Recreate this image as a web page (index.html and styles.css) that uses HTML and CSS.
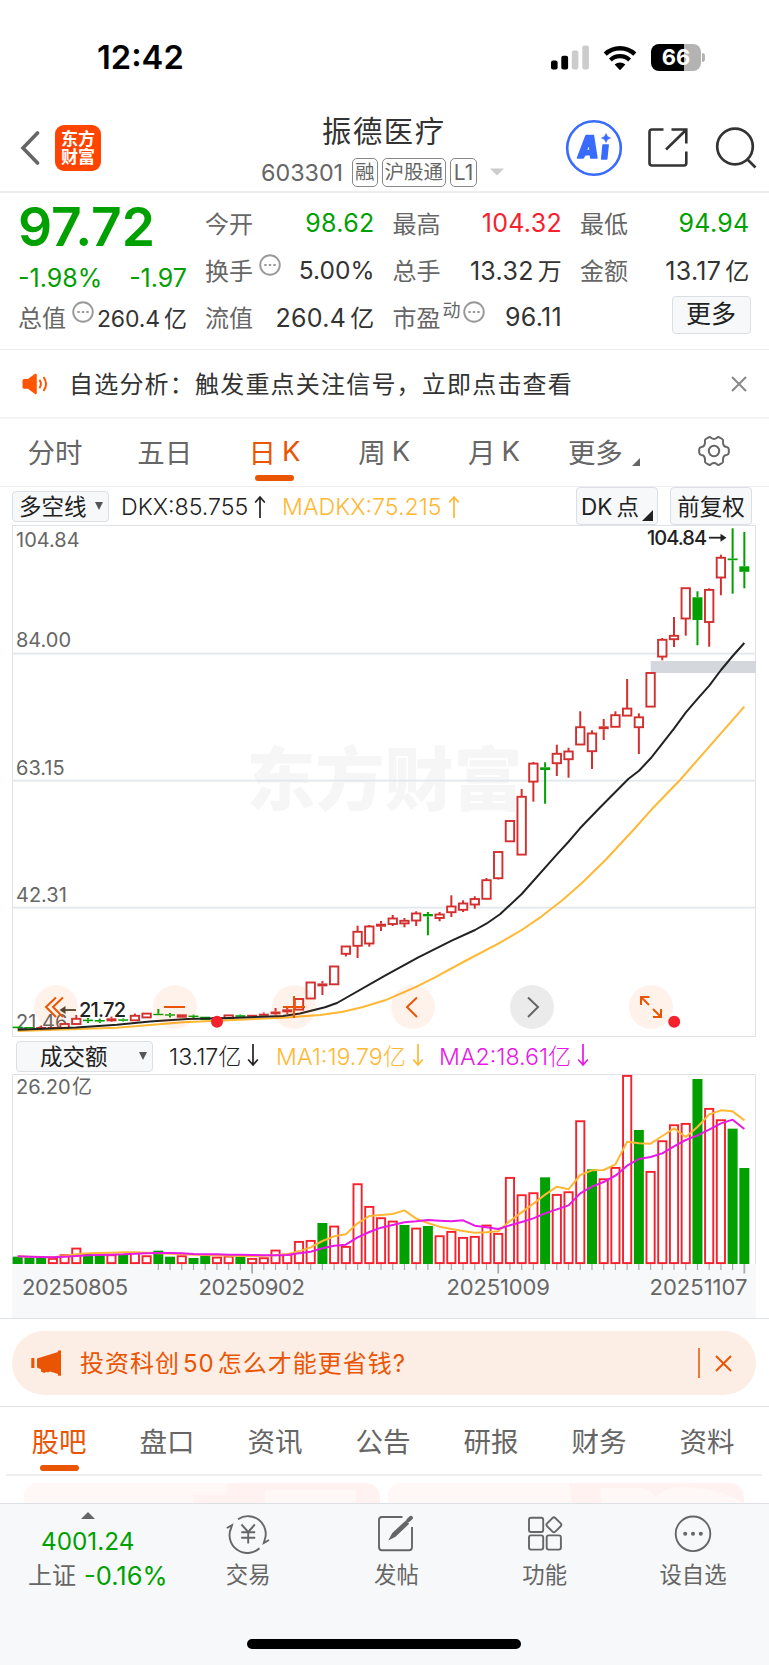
FILE: index.html
```html
<!DOCTYPE html>
<html lang="zh-CN">
<head>
    <meta charset="UTF-8">
    <meta name="viewport" content="width=device-width, initial-scale=1.0">
    <title>振德医疗 603301</title>
    <link rel="stylesheet" href="styles.css">
</head>
<body>

<div class="status-bar">
    <div class="clock">12:42</div>
    <div class="status-icons">
        <svg class="signal" width="38" height="25" viewBox="0 0 38 25">
            <rect x="0" y="15.5" width="6.6" height="9" rx="2"/>
            <rect x="10.3" y="10.8" width="6.8" height="13.7" rx="2"/>
            <rect x="20.8" y="5.6" width="6.6" height="18.9" rx="2" fill="#ccc"/>
            <rect x="31.3" y="0.5" width="6.6" height="24" rx="2" fill="#ccc"/>
        </svg>
        <svg class="wifi" width="34" height="26" viewBox="0 0 34 26">
            <path d="M2.2 9.2 A21.5 21.5 0 0 1 31.8 9.2" fill="none" stroke="#000" stroke-width="4.4"/>
            <path d="M7.4 15 A14 14 0 0 1 26.6 15" fill="none" stroke="#000" stroke-width="4.2"/>
            <path d="M17 25.2 L11.6 19.6 A8 8 0 0 1 22.4 19.6 Z"/>
        </svg>
        <div class="battery"><span>66</span></div>
        <div class="battery-tip"></div>
    </div>
</div>

<div class="nav-bar">
    <div class="nav-left">
        <svg width="20" height="36" viewBox="0 0 20 36"><path d="M17.5 3 L3 18 L17.5 33" fill="none" stroke="#666" stroke-width="3.6" stroke-linecap="round"/></svg>
        <div class="logo">东方<br>财富</div>
    </div>
    <div class="nav-title">
        <div class="stock-name">振德医疗</div>
        <div class="stock-code">
            <span class="code">603301</span>
            <span class="tag">融</span>
            <span class="tag">沪股通</span>
            <span class="tag level">L1</span>
            <svg width="14" height="8" viewBox="0 0 14 8"><path d="M0 0.5 H14 L7 7.5 Z" fill="#ccc"/></svg>
        </div>
    </div>
    <div class="nav-right">
        <svg width="58" height="58" viewBox="0 0 58 58">
            <circle cx="29" cy="29" r="26.8" fill="none" stroke="#3a6bff" stroke-width="2.6"/>
            <g fill="#3a6bff" stroke="#3a6bff" stroke-width="1.4" stroke-linejoin="round">
                <path fill-rule="evenodd" d="M21 16.5 H28.5 L32 39 H25.8 L25.2 35.8 H20.2 L18.2 39 H12.4 Z M24.2 25 L21.2 31.4 H25 Z"/>
                <path d="M38 26 H43.2 L41.8 40 H36.6 Z"/>
                <path stroke-width="0.5" d="M41 14.5 L42.6 17.6 L45.6 19 L42.6 20.5 L41 23.5 L39.4 20.5 L36.4 19 L39.4 17.6 Z"/>
            </g>
        </svg>
        <svg class="share" width="42" height="42" viewBox="0 0 42 42" fill="none" stroke="#333" stroke-width="2.6">
            <path d="M16.5 2.5 H5 Q2.5 2.5 2.5 5 V36 Q2.5 38.5 5 38.5 H37 Q39.3 38.5 39.3 36 V24.5"/>
            <path d="M24.5 2.5 H39.3 V16.5 M39 3 L19 22.5"/>
        </svg>
        <svg width="42" height="42" viewBox="0 0 42 42" fill="none" stroke="#333" stroke-width="2.7">
            <circle cx="20" cy="19.5" r="17.8"/>
            <path d="M32 32 L40.5 40.5"/>
        </svg>
    </div>
</div>

<div class="quote">
    <div class="quote-main">
        <div class="price down">97.72</div>
        <div class="change down"><span>-1.98%</span><span>-1.97</span></div>
        <div class="cell"><span class="label">总值</span><svg class="more-dot" viewBox="0 0 22 22"><circle cx="11" cy="11" r="9.8"/><path d="M5.3 11h2.4M9.8 11h2.4M14.3 11h2.4"/></svg><span class="value small">260.4<i>亿</i></span></div>
    </div>
    <div class="quote-grid">
        <div class="cell"><span class="label">今开</span><span class="value down">98.62</span></div>
        <div class="cell"><span class="label">最高</span><span class="value up">104.32</span></div>
        <div class="cell"><span class="label">最低</span><span class="value down">94.94</span></div>
        <div class="cell"><span class="label">换手</span><svg class="more-dot" viewBox="0 0 22 22"><circle cx="11" cy="11" r="9.8"/><path d="M5.3 11h2.4M9.8 11h2.4M14.3 11h2.4"/></svg><span class="value percent">5.00%</span></div>
        <div class="cell"><span class="label">总手</span><span class="value">13.32<i>万</i></span></div>
        <div class="cell"><span class="label">金额</span><span class="value">13.17<i>亿</i></span></div>
        <div class="cell"><span class="label">流值</span><span class="value">260.4<i>亿</i></span></div>
        <div class="cell"><span class="label">市盈</span><span class="sup">动</span><svg class="more-dot tight" viewBox="0 0 22 22"><circle cx="11" cy="11" r="9.8"/><path d="M5.3 11h2.4M9.8 11h2.4M14.3 11h2.4"/></svg><span class="value">96.11</span></div>
        <div class="cell"><button class="more-button">更多</button></div>
    </div>
</div>

<div class="notice">
    <svg class="speaker" width="26" height="22" viewBox="0 0 26 22">
        <path d="M0.5 7.5 Q0.5 6 2 6 H6 L13 0.8 Q14.6 0.2 14.8 2 V20 Q14.6 21.8 13 21 L6 15.8 H2 Q0.5 15.8 0.5 14 Z" fill="#ff5500"/>
        <path d="M17.5 6.8 Q20.3 11 17.5 15.2 M21.5 4 Q26.6 11 21.5 18" fill="none" stroke="#ff5500" stroke-width="2"/>
    </svg>
    <span class="notice-text">自选分析：触发重点关注信号，立即点击查看</span>
    <svg width="16" height="16" viewBox="0 0 16 16"><path d="M1 1 L15 15 M15 1 L1 15" stroke="#888" stroke-width="2"/></svg>
</div>

<div class="period-tabs">
    <div class="tab">分时</div>
    <div class="tab">五日</div>
    <div class="tab active">日<i>K</i></div>
    <div class="tab">周<i>K</i></div>
    <div class="tab">月<i>K</i></div>
    <div class="tab more">更多<svg width="8" height="8" viewBox="0 0 8 8"><path d="M8 0 V8 H0 Z" fill="#666"/></svg></div>
    <div class="tab">
        <svg width="32" height="32" viewBox="0 0 32 32" fill="none" stroke="#666" stroke-width="2" stroke-linejoin="round">
            <path d="M10.2 2.6 Q12 1.4 13 2.8 Q16 5 19 2.8 Q20 1.4 21.8 2.6 L24.2 4 Q25.6 4.8 25 6.8 Q24.8 11.6 28.6 12 Q30.8 12.6 30.8 14.2 V17.8 Q30.8 19.4 28.6 20 Q24.8 20.4 25 25.2 Q25.6 27.2 24.2 28 L21.8 29.4 Q20 30.6 19 29.2 Q16 27 13 29.2 Q12 30.6 10.2 29.4 L7.8 28 Q6.4 27.2 7 25.2 Q7.2 20.4 3.4 20 Q1.2 19.4 1.2 17.8 V14.2 Q1.2 12.6 3.4 12 Q7.2 11.6 7 6.8 Q6.4 4.8 7.8 4 Z"/>
            <circle cx="16" cy="16" r="5.2"/>
        </svg>
    </div>
</div>

<div class="indicator-bar">
    <div class="select">多空线<span class="caret"></span></div>
    <span class="ind dkx">DKX:85.755<svg class="arr" viewBox="0 0 12 24"><path d="M6 23V2M1.2 7.5L6 2l4.8 5.5"/></svg></span>
    <span class="ind madkx">MADKX:75.215<svg class="arr" viewBox="0 0 12 24"><path d="M6 23V2M1.2 7.5L6 2l4.8 5.5"/></svg></span>
    <div class="chip dk">DK<i>点</i><span class="corner"></span></div>
    <div class="chip">前复权</div>
</div>

<div class="chart-wrap">
    <div class="watermark">东方财富</div>
    <svg id="kline" class="kline" width="745" height="513" viewBox="12 525 745 513"></svg>
    <div class="chart-tools">
        <button class="tool"><svg viewBox="0 0 44 44"><path d="M22 12.5 L12 22 L22 32 M29 12.5 L19 22 L29 32"/></svg></button>
        <button class="tool"><svg viewBox="0 0 44 44"><path d="M11 22 H32"/></svg></button>
        <button class="tool"><svg viewBox="0 0 44 44"><path d="M11 22 H33 M22 11 V33"/></svg></button>
        <button class="tool"><svg viewBox="0 0 44 44"><path d="M26 12.5 L16 22 L26 32"/></svg></button>
        <button class="tool gray"><svg viewBox="0 0 44 44"><path d="M18 12.5 L28 22 L18 32"/></svg></button>
        <button class="tool"><svg viewBox="0 0 44 44"><path d="M20.5 12 H12 V20 M12 12 L20 20 M24 32 H32 V24 M32 32 L24 24"/></svg></button>
    </div>
</div>

<div class="volume-bar">
    <div class="select wide">成交额<span class="caret"></span></div>
    <span class="ind vol">13.17亿<svg class="arr" viewBox="0 0 12 24"><path d="M6 1V22M1.2 16.5L6 22l4.8-5.5"/></svg></span>
    <span class="ind ma1">MA1:19.79亿<svg class="arr" viewBox="0 0 12 24"><path d="M6 1V22M1.2 16.5L6 22l4.8-5.5"/></svg></span>
    <span class="ind ma2">MA2:18.61亿<svg class="arr" viewBox="0 0 12 24"><path d="M6 1V22M1.2 16.5L6 22l4.8-5.5"/></svg></span>
</div>

<svg id="volume" class="volume" width="745" height="244" viewBox="12 1074 745 244"></svg>

<div class="banner-row">
    <div class="banner">
        <svg width="31" height="26" viewBox="0 0 31 26" fill="#ea5504">
            <path d="M0.3 8 H3.4 V18 H0.3 Z M6 8.5 L27 2 V0.4 H30 V25.8 H27 V24 L19 21.6 L17 22.6 L15.4 21.8 L13.5 23 L10 21.5 V19.3 L6 17.6 Z"/>
        </svg>
        <span class="banner-text">投资科创<b>50</b>怎么才能更省钱?</span>
        <span class="banner-line"></span>
        <svg width="17" height="17" viewBox="0 0 17 17"><path d="M1 1 L16 16 M16 1 L1 16" stroke="#ea5504" stroke-width="2"/></svg>
    </div>
</div>

<div class="info-tabs">
    <div class="tab active">股吧</div>
    <div class="tab">盘口</div>
    <div class="tab">资讯</div>
    <div class="tab">公告</div>
    <div class="tab">研报</div>
    <div class="tab">财务</div>
    <div class="tab">资料</div>
</div>

<div class="cards">
    <svg class="card" viewBox="0 0 356 20">
        <rect width="356" height="20" fill="#fff2f0"/>
        <path d="M0 0H203V12H170V20H0Z" fill="#fff8f6"/>
        <rect x="241" y="7" width="91" height="13" fill="#fff8f6"/>
    </svg>
    <svg class="card" viewBox="0 0 356 20">
        <rect width="356" height="20" fill="#fff2f0"/>
        <path d="M0 0H181L184 20H0Z" fill="#fff8f6"/>
        <path d="M212 5H256Q264 8 268 14Q276 5 290 4Q330 4 356 20H214Z" fill="#fff8f6"/>
    </svg>
</div>

<div class="bottom-bar">
    <div class="index">
        <svg width="14" height="7" viewBox="0 0 14 7"><path d="M7 0 L14 7 H0 Z" fill="#666"/></svg>
        <div class="index-value down">4001.24</div>
        <div class="index-name">上证<span class="down">-0.16%</span></div>
    </div>
    <div class="action">
        <svg width="44" height="40" viewBox="0 0 44 40" fill="none" stroke="#666" stroke-width="1.9">
            <path d="M12 5.2 A17.8 17.8 0 0 1 38.5 26.5 L37.8 29 L43 26"/>
            <path d="M33.5 34.2 A17.8 17.8 0 0 1 5.3 13.5 L6 11.2 L0.8 14"/>
            <path d="M15.5 10.5 L22.2 18 L28.8 10.5 M15.2 18.3 H29.2 M15.2 23.8 H29.2 M22.2 18 V29.5"/>
        </svg>
        <span>交易</span>
    </div>
    <div class="action">
        <svg width="44" height="40" viewBox="0 0 44 40" fill="none" stroke="#666" stroke-width="1.9">
            <path d="M28.5 3 H8 Q5 3 5 6 V33 Q5 36.3 8 36.3 H35 Q38 36.3 38 33 V13"/>
            <path d="M16.5 24.3 L19 19.5 L31.8 7.8 L33.8 9.8 L21 22 Z" fill="#666"/>
            <path d="M34.2 6.4 L37 3.8" stroke-width="4" stroke-linecap="round"/>
        </svg>
        <span>发帖</span>
    </div>
    <div class="action">
        <svg width="44" height="40" viewBox="0 0 44 40" fill="none" stroke="#666" stroke-width="1.9">
            <rect x="6" y="3.8" width="14.2" height="14.2" rx="2"/>
            <rect x="6" y="21.4" width="14.2" height="14.2" rx="2"/>
            <rect x="23.7" y="21.4" width="14.2" height="14.2" rx="2"/>
            <rect x="25.1" y="5" width="11.6" height="11.6" rx="2" transform="rotate(45 30.9 10.8)"/>
        </svg>
        <span>功能</span>
    </div>
    <div class="action">
        <svg width="44" height="40" viewBox="0 0 44 40">
            <circle cx="22" cy="19.8" r="17.3" fill="none" stroke="#666" stroke-width="1.9"/>
            <g fill="#666"><circle cx="14.2" cy="19.8" r="2"/><circle cx="22" cy="19.8" r="2"/><circle cx="29.8" cy="19.8" r="2"/></g>
        </svg>
        <span>设自选</span>
    </div>
    <div class="home-indicator"></div>
</div>

<script src="chart.js"></script>
</body>
</html>
```
FILE: styles.css
```css
* {
    box-sizing: border-box;
}
body {
    margin: 0;
    width: 769px;
    height: 1665px;
    overflow: hidden;
    display: flex;
    flex-direction: column;
    background: #fff;
    color: #333;
    font-family: Inter, "Noto Sans CJK SC", sans-serif;
}
body > * {
    flex-shrink: 0;
}
i {
    font-style: normal;
}
svg {
    display: block;
    flex-shrink: 0;
}
button {
    font-family: inherit;
    padding: 0;
    border: none;
}
.down {
    color: #00a000;
}
.up {
    color: #f5222d;
}

/* status bar */
.status-bar {
    height: 96px;
    padding: 36px 64px 0 97px;
    display: flex;
    justify-content: space-between;
}
.clock {
    font-size: 32.7px;
    line-height: 42px;
    font-weight: 600;
    color: #000;
}
.status-icons {
    height: 43px;
    display: flex;
    align-items: center;
}
.wifi {
    margin: 0 14px 0 14px;
}
.battery {
    width: 50px;
    height: 27px;
    border-radius: 8px;
    background: linear-gradient(90deg, #000 33px, #b3b3b3 33px);
    color: #fff;
    font-size: 22px;
    line-height: 27px;
    font-weight: 700;
    text-align: center;
}
.battery-tip {
    width: 3px;
    height: 9px;
    margin-left: 1px;
    border-radius: 0 3px 3px 0;
    background: #b3b3b3;
}

/* title bar */
.nav-bar {
    height: 97px;
    padding: 0 12px 0 20px;
    border-bottom: 2px solid #eee;
    display: flex;
    justify-content: space-between;
}
.nav-left {
    width: 200px;
    height: 103px;
    display: flex;
    align-items: center;
}
.logo {
    width: 46px;
    height: 46px;
    margin-left: 15px;
    padding-top: 5px;
    border-radius: 9px;
    background: #ff4400;
    color: #fff;
    font-size: 17px;
    line-height: 18.5px;
    font-weight: 700;
    text-align: center;
}
.nav-title {
    flex: 1;
    padding-left: 41px;
}
.stock-name {
    padding: 15px 0 0 61px;
    font-size: 29.3px;
    line-height: 42px;
    letter-spacing: 1.6px;
}
.stock-code {
    height: 30px;
    margin-top: 4px;
    display: flex;
    align-items: center;
    color: #666;
}
.code {
    width: 91px;
    font-size: 23.3px;
}
.tag {
    height: 29px;
    margin-right: 4px;
    padding: 0 2px;
    border: 1px solid #888;
    border-radius: 5px;
    font-size: 19.5px;
    line-height: 27px;
    text-align: center;
}
.tag.level {
    width: 27px;
    padding: 0;
    font-size: 21px;
}
.stock-code svg {
    margin-left: 9px;
}
.nav-right {
    height: 103px;
    display: flex;
    align-items: center;
}
.share {
    margin: 0 26px 0 24px;
}

/* quote */
.quote {
    height: 157px;
    padding: 0 19px 0 18px;
    border-bottom: 1px solid #eee;
    display: flex;
}
.quote-main {
    width: 169px;
    margin-right: 18px;
}
.price {
    height: 62px;
    font-size: 53.4px;
    line-height: 67px;
    font-weight: 600;
}
.change {
    height: 38px;
    display: flex;
    justify-content: space-between;
    font-size: 25px;
    line-height: 46px;
}
.quote-grid {
    flex: 1;
    padding-top: 6px;
    display: grid;
    grid-template-columns: 169.5px 169.5px 169.5px;
    grid-template-rows: 47px 47px 47px;
    column-gap: 18px;
}
.cell {
    height: 47px;
    display: flex;
    align-items: center;
}
.label {
    margin-top: -1px;
    font-size: 24px;
    color: #666;
}
.value {
    margin-left: auto;
    font-size: 25px;
    letter-spacing: 0.3px;
    white-space: nowrap;
}
.value.percent {
    font-size: 24.5px;
    letter-spacing: 0;
}
.value.small {
    font-size: 23px;
    letter-spacing: -0.1px;
}
.value i {
    margin-left: 4px;
    font-size: 24px;
}
.value.small i {
    font-size: 23px;
}
.more-dot {
    width: 22px;
    height: 22px;
    margin: -10px 0 0 6px;
    fill: none;
    stroke: #999;
    stroke-width: 1.9;
}
.more-dot.tight {
    margin-left: 2px;
}
.sup {
    margin: -16px 0 0 2px;
    font-size: 18px;
    color: #666;
}
.more-button {
    width: 79px;
    height: 38px;
    margin: -4px -1px 0 auto;
    flex-shrink: 0;
    border: 1px solid #dcdee5;
    border-radius: 4px;
    background: #f7f8fa;
    color: #222;
    font-size: 25px;
    line-height: 35px;
}

/* notice */
.notice {
    height: 69px;
    padding: 0 22px;
    border-bottom: 2px solid #f4f4f4;
    display: flex;
    align-items: center;
}
.notice-text {
    flex: 1;
    margin: -2px 0 0 21px;
    font-size: 24px;
    letter-spacing: 1.2px;
}

/* tabs */
.period-tabs {
    height: 68px;
    border-bottom: 1px solid #eee;
    display: flex;
}
.tab {
    position: relative;
    width: 108px;
    height: 66px;
    padding-bottom: 2px;
    display: flex;
    align-items: center;
    justify-content: center;
    font-size: 27.5px;
    color: #666;
}
.period-tabs .tab {
    width: 109.8px;
}
.tab i {
    margin-left: 6px;
}
.tab.more svg {
    margin: 22px 0 0 9px;
}
.tab.active {
    color: #ea5504;
}
.tab.active::after {
    content: "";
    position: absolute;
    left: 50%;
    bottom: 4px;
    width: 39px;
    height: 6px;
    margin-left: -19px;
    border-radius: 3px;
    background: #ea5504;
}

/* indicator rows */
.indicator-bar {
    height: 38px;
    padding: 0 17px 0 12px;
    display: flex;
    align-items: center;
}
.select {
    width: 97px;
    height: 31px;
    padding: 0 5px 0 6px;
    border: 1px solid #dcdfe4;
    border-radius: 4px;
    background: #f7f8fa;
    display: flex;
    align-items: center;
    justify-content: space-between;
    font-size: 22.5px;
    line-height: 29px;
    color: #222;
}
.caret {
    border: 4.5px solid transparent;
    border-top: 8px solid #555;
    border-bottom: none;
}
.select.wide {
    width: 137px;
    padding-left: 23px;
}
.ind {
    display: flex;
    align-items: center;
    font-size: 23.2px;
    font-weight: 300;
    color: #222;
    white-space: nowrap;
}
.dkx {
    width: 148px;
    margin: 1px 0 0 12px;
}
.madkx {
    margin: 1px 0 0 13px;
    color: #ffb833;
}
.ma1 {
    width: 149px;
    margin-left: 13px;
    color: #ffb833;
}
.ma2 {
    margin-left: 14px;
    color: #e619e6;
}
.vol {
    width: 94px;
    margin-left: 16px;
}
.volume-bar .ind {
    margin-top: -2px;
}
.arr {
    width: 12px;
    height: 24px;
    margin-left: 6px;
    fill: none;
    stroke: currentColor;
    stroke-width: 1.7;
}
.chip {
    position: relative;
    width: 82px;
    height: 38px;
    border: 1px solid #dcdee5;
    border-radius: 4px;
    background: #f7f8fa;
    font-size: 22.5px;
    line-height: 37px;
    text-align: center;
    color: #222;
    white-space: nowrap;
}
.chip.dk {
    margin: 0 12px 0 auto;
    padding-right: 14px;
}
.chip.dk i {
    margin-left: 4px;
}
.corner {
    position: absolute;
    right: 4px;
    bottom: 3px;
    border-left: 11px solid transparent;
    border-bottom: 11px solid #222;
}

/* charts */
.chart-wrap {
    position: relative;
    height: 513px;
    padding-left: 12px;
}
.watermark {
    position: absolute;
    left: 0;
    top: 205px;
    width: 769px;
    text-align: center;
    font-size: 69px;
    line-height: 100px;
    font-weight: 900;
    color: #f6f6f6;
}
.kline {
    position: relative;
}
.kline text, .volume text {
    fill: #666;
    font-size: 20px;
}
.kline .mark {
    fill: #222;
    font-weight: 500;
}
.volume .date {
    font-size: 22px;
}
.chart-tools {
    position: absolute;
    left: 34px;
    top: 460px;
    display: flex;
    gap: 75px;
}
.tool {
    width: 44px;
    height: 44px;
    border-radius: 50%;
    background: rgba(255, 85, 0, 0.08);
}
.tool svg {
    fill: none;
    stroke: #ea5504;
    stroke-width: 2;
}
.tool.gray {
    background: rgba(0, 0, 0, 0.08);
}
.tool.gray svg {
    stroke: #666;
}
.volume-bar {
    height: 36px;
    padding-left: 16px;
    display: flex;
    align-items: center;
}
.volume {
    margin-left: 12px;
}

/* banner */
.banner-row {
    height: 89px;
    padding: 12px 13px 0 12px;
    border-top: 1px solid #dfe1e5;
    border-bottom: 1px solid #dfe1e5;
}
.banner {
    height: 64px;
    padding: 0 24px 0 19px;
    border-radius: 32px;
    background: #fdeee5;
    display: flex;
    align-items: center;
    color: #ea5504;
}
.banner-text {
    flex: 1;
    margin: -3px 0 0 18px;
    font-size: 24px;
    letter-spacing: 1px;
}
.banner-text b {
    margin: 0 3px;
    font-weight: 400;
}
.banner-line {
    width: 2px;
    height: 30px;
    margin-right: 15px;
    background: #ea7a3c;
}

/* info tabs */
.info-tabs {
    height: 69px;
    margin: 0 7px 0 6px;
    border-bottom: 2px solid #eee;
    display: flex;
}
.info-tabs .tab {
    height: 63px;
    padding: 2px 2px 0 0;
}
.info-tabs .tab.active::after {
    bottom: -1px;
    margin-left: -20px;
}
.cards {
    height: 27px;
    padding: 7px 0 0 24px;
    display: flex;
    gap: 8px;
    overflow: hidden;
}
.card {
    width: 356px;
    height: 20px;
    border-radius: 14px 14px 0 0;
}

/* bottom bar */
.bottom-bar {
    position: relative;
    flex: 1;
    border-top: 1px solid #dcdfe3;
    background: #f7f8fa;
    display: flex;
    color: #666;
}
.index {
    width: 174px;
    padding-top: 8px;
}
.index svg {
    margin-left: 81px;
}
.index-value {
    margin-top: 4px;
    padding-left: 41px;
    font-size: 24.3px;
    line-height: 36px;
}
.index-name {
    display: flex;
    padding-left: 28px;
    font-size: 24px;
    line-height: 34px;
    white-space: nowrap;
}
.index-name span {
    margin-left: 8px;
    font-size: 25.5px;
}
.action {
    width: 148.3px;
    padding-top: 10px;
    display: flex;
    flex-direction: column;
    align-items: center;
    font-size: 22.4px;
    line-height: 36px;
}
.action span {
    margin-top: 3px;
}
.home-indicator {
    position: absolute;
    left: 247px;
    bottom: 16px;
    width: 274px;
    height: 10px;
    border-radius: 5px;
    background: #000;
}
```
FILE: chart.js
```js
const NS = 'http://www.w3.org/2000/svg';
const RED = '#d32f2f';
const GREEN = '#00a000';
const START = 17.7;
const STEP = 11.72;

// [type, body top, body bottom, high, low], g = down, r = up, s = up but too thin to be hollow
const candles = [
    ['g', 1026.6, 1028.2], ['g', 1027, 1028.4], ['s', 1027, 1029, 1025.5, 1030], ['s', 1027, 1029],
    ['r', 1024, 1028], ['r', 1018.8, 1024, 1015, 1024], ['g', 1019.6, 1021.2, 1018, 1023], ['g', 1020, 1021.6, 1018.6, 1023],
    ['s', 1018.3, 1021.3, 1016.6, 1022], ['g', 1019.3, 1020.8, 1018.5, 1021.5], ['r', 1015.8, 1020.3, 1013.6, 1020.3], ['r', 1013.6, 1017.4],
    ['g', 1013.8, 1015.2, 1009, 1015], ['g', 1014.3, 1015.7, 1013, 1017.5], ['s', 1014.3, 1017.7], ['g', 1015.6, 1017, 1014.6, 1018],
    ['g', 1016.7, 1020], ['s', 1017, 1020], ['r', 1015.4, 1018.3], ['g', 1015.2, 1016.8, 1014.5, 1018],
    ['s', 1014.8, 1016.7], ['s', 1013.7, 1015.8, 1012.5, 1017], ['s', 1011.5, 1014.3, 1008, 1015], ['s', 1009.3, 1012.3, 1008, 1014],
    ['r', 999, 1009.6], ['r', 982.5, 998.5], ['s', 983.4, 986.4, 981, 995], ['r', 966.5, 984.3],
    ['r', 946.5, 953.8, 946, 956.5], ['r', 931.8, 945.8, 925.7, 958], ['r', 926.5, 943.5, 925, 946.7], ['s', 923.7, 926.7, 921, 931],
    ['r', 918.5, 924, 915, 926], ['r', 920.8, 923.4, 918, 927.3], ['r', 913.5, 920.5, 911.3, 926], ['g', 914, 916.3, 912, 935.3],
    ['r', 914.5, 918, 912, 921.3], ['r', 906.5, 912.2, 895.3, 917], ['r', 903.5, 909.8, 900.3, 912], ['r', 899, 904.5, 896.3, 908.7],
    ['r', 880.2, 898.8, 878, 899], ['r', 852, 878.2, 852, 879.5], ['r', 821, 841.3], ['r', 796.8, 854.6, 789, 855],
    ['r', 763.6, 781.6, 762, 801.7], ['g', 767.3, 770, 762.3, 803.7], ['r', 753.8, 763.2, 744.7, 776], ['r', 751.5, 759.2, 747.7, 777.7],
    ['r', 727.2, 744.5, 711.3, 745], ['r', 733.5, 751.2, 730.3, 769], ['s', 726.3, 729.2, 719, 740], ['r', 715.2, 726.8, 711.3, 727],
    ['r', 708.6, 715.6, 679, 716], ['r', 717.3, 727.2, 713.3, 754], ['r', 673, 706.6], ['r', 639.8, 656.6, 638, 660.3],
    ['r', 635.8, 639.2, 617, 647], ['r', 588.2, 618.5, 588, 635.7], ['g', 597.3, 620, 591.3, 645.3], ['r', 589.9, 622, 588.3, 646.7],
    ['r', 557.8, 577.5, 554.7, 595.3], ['g', 558.5, 560.2, 528.3, 593.7], ['g', 566.3, 571.8, 532, 588.3]
];

const dkx = [
    [17.7, 1029.7], [76, 1027.5], [117, 1024.7], [150, 1021.4], [187, 1019], [230, 1018], [283, 1016], [300, 1013.5], [325, 1007.3],
    [337, 1003], [385, 975.7], [418.3, 957.3], [451.7, 940.7], [475, 930], [486.3, 923.7], [500, 914.3], [521.7, 894], [556.7, 854.7],
    [568.3, 842], [580, 828.3], [598.3, 809.3], [628.3, 779], [639, 770.7], [650.7, 758.3], [674, 728.7], [685.7, 712.7],
    [697.7, 698.7], [709.3, 685.7], [721, 670], [732.7, 656], [744.3, 643]
];
const madkx = [
    [17.7, 1031], [117, 1027.7], [183, 1022.3], [283, 1017.7], [320, 1015], [343, 1011.7], [363, 1007], [385, 1000.3], [415, 987.3],
    [435, 977.3], [463.3, 962], [498.3, 943.7], [521.7, 930], [541.7, 916.3], [561.7, 900.7], [581.7, 883.3], [606.7, 858.7],
    [633.3, 830], [651.7, 809.3], [680, 780], [744.3, 706.7]
];

// turnover, one unit is 1/3 px, lowercase g marks a down day
const volumes = ('22g 20g 20g 18 29 49 33g 29g 29 28g 36 26 40g 22g 26 18g 25g 22 25 23g 18 20 43 31 69 72 123g 115 54 ' +
    '242 174 140 130 117g 109 114g 86 99 81 84 118 93 261 209 215 260g 210 218 431 284g 257 291 567 402g 279 371 419 423 ' +
    '555g 468 434 406g 288g').split(' ');
const ma1 = [23, 22, 21, 20, 24, 29, 32, 33, 34, 35, 35, 34, 32, 31, 30, 28, 27, 26, 25, 24, 24, 25, 26, 29, 38, 50, 69, 83, 89,
    122, 144, 147, 150, 161, 136, 123, 112, 105, 99, 94, 95, 98, 129, 155, 181, 208, 232, 224, 267, 281, 282, 299, 367, 362,
    361, 384, 407, 381, 411, 449, 461, 458, 431];
const ma2 = [23, 22, 21, 20, 22, 24, 26, 27, 28, 29, 31, 32, 33, 33, 32, 30, 29, 29, 28, 28, 27, 26, 26, 27, 32, 37, 47, 55, 58,
    80, 96, 109, 117, 125, 128, 132, 130, 128, 131, 115, 110, 105, 116, 126, 137, 152, 164, 176, 212, 232, 246, 265, 295, 315,
    321, 332, 353, 372, 386, 403, 422, 433, 405];

function add(parent, tag, attrs, text) {
    const el = document.createElementNS(NS, tag);
    for (const key in attrs) el.setAttribute(key, attrs[key]);
    if (text) el.textContent = text;
    parent.appendChild(el);
    return el;
}

function line(parent, points, color) {
    add(parent, 'polyline', {
        points: points.map(p => p.join(',')).join(' '),
        fill: 'none', stroke: color, 'stroke-width': 2, 'stroke-linejoin': 'round'
    });
}

function drawKline() {
    const svg = document.getElementById('kline');
    add(svg, 'rect', {x: 12.5, y: 525.5, width: 743, height: 511, fill: 'none', stroke: '#dfe3e8'});
    [653.7, 780.6, 907.7].forEach(y => {
        add(svg, 'path', {d: `M12 ${y} H756`, stroke: '#e2e7ec', 'stroke-width': 1.8});
    });
    add(svg, 'rect', {x: 650.7, y: 661, width: 105.3, height: 12, fill: '#d4d7dc'});

    [['104.84', 547], ['84.00', 647], ['63.15', 774.5], ['42.31', 901.7], ['21.46', 1029.3]].forEach(([t, y]) => {
        add(svg, 'text', {x: 16, y: y}, t);
    });

    candles.forEach(([type, top, bottom, high, low], i) => {
        const x = START + STEP * i;
        const color = type === 'g' ? GREEN : RED;
        if (high && high < top) add(svg, 'path', {d: `M${x} ${high} V${top}`, stroke: color, 'stroke-width': 2});
        if (low && low > bottom) add(svg, 'path', {d: `M${x} ${bottom} V${low}`, stroke: color, 'stroke-width': 2});
        if (type === 'r') {
            add(svg, 'rect', {x: x - 4.2, y: top, width: 8.4, height: bottom - top, fill: '#fff', stroke: color, 'stroke-width': 1.9});
        } else {
            add(svg, 'rect', {x: x - 5, y: top, width: 10, height: bottom - top, fill: color});
        }
    });

    line(svg, madkx, '#ffb833');
    line(svg, dkx, '#222');

    add(svg, 'text', {x: 647, y: 545, class: 'mark', textLength: 60}, '104.84');
    add(svg, 'path', {d: 'M709 537.7 H723', stroke: '#222', 'stroke-width': 1.8});
    add(svg, 'path', {d: 'M726.5 537.7 L720.5 533.7 V541.7 Z', fill: '#222'});
    add(svg, 'text', {x: 79, y: 1017, class: 'mark', textLength: 47}, '21.72');
    add(svg, 'path', {d: 'M63 1010 H76', stroke: '#443', 'stroke-width': 1.8});
    add(svg, 'path', {d: 'M59.5 1010 L65.5 1006 V1014 Z', fill: '#443'});
    add(svg, 'circle', {cx: 217, cy: 1021.7, r: 6, fill: '#f5222d'});
    add(svg, 'circle', {cx: 674.2, cy: 1021.7, r: 6, fill: '#f5222d'});
}

function drawVolume() {
    const svg = document.getElementById('volume');
    const base = 1264;
    add(svg, 'rect', {x: 12, y: base, width: 744, height: 54, fill: '#f7f8fa'});
    add(svg, 'path', {d: `M12.5 ${base} V1074.5 H755.5 V${base}`, fill: 'none', stroke: '#dfe3e8'});
    add(svg, 'text', {x: 16, y: 1094}, '26.20');
    add(svg, 'text', {x: 72, y: 1094}, '亿');

    volumes.forEach((v, i) => {
        const x = START + STEP * i;
        const h = parseInt(v) / 3;
        if (v.endsWith('g')) {
            add(svg, 'rect', {x: x - 5, y: base - h, width: 10, height: h, fill: GREEN});
        } else {
            add(svg, 'rect', {x: x - 4.1, y: base - h + 0.9, width: 8.2, height: h - 1.8, fill: '#fff', stroke: '#f5222d', 'stroke-width': 1.9});
        }
        if (i > 11) {
            const big = i === 20 || i === 41 || i === 62;
            add(svg, 'path', {d: `M${x} ${base} V${big ? 1273.5 : 1270}`, stroke: '#aaa', 'stroke-width': big ? 1.8 : 1.2});
        }
    });

    line(svg, ma1.map((v, i) => [START + STEP * i, base - v / 3]), '#ffb833');
    line(svg, ma2.map((v, i) => [START + STEP * i, base - v / 3]), '#e619e6');

    [['20250805', 22, 106], ['20250902', 198.5, 106.5], ['20251009', 446.5, 103.5], ['20251107', 649.5, 98]].forEach(([t, x, w]) => {
        add(svg, 'text', {x: x, y: 1295, class: 'date', textLength: w}, t);
    });
}

drawKline();
drawVolume();
```
